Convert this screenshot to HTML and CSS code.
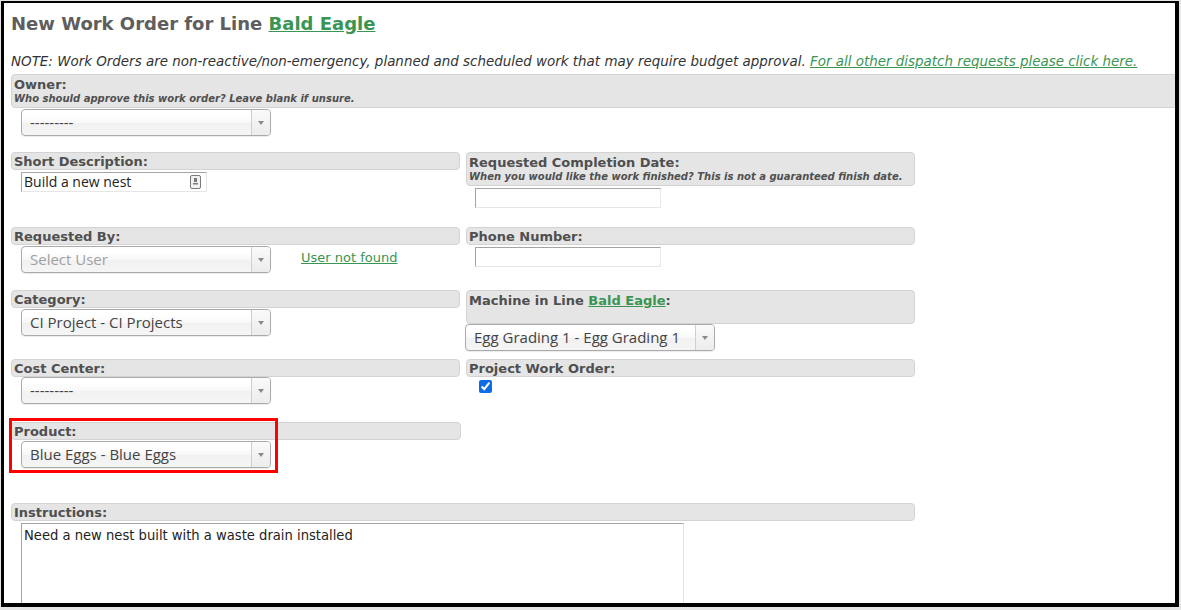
FILE: index.html
```html
<!DOCTYPE html>
<html>
<head>
<meta charset="utf-8">
<title>New Work Order</title>
<link rel="stylesheet" href="styles.css">
</head>
<body>
<div class="frame">
  <h1 class="title">New Work Order for Line <a class="lnk" href="#">Bald Eagle</a></h1>
  <p class="note">NOTE: Work Orders are non-reactive/non-emergency, planned and scheduled work that may require budget approval. <a class="lnk" href="#">For all other dispatch requests please click here.</a></p>

  <section class="owner">
    <div class="bar tall wide">
      <div class="lbl">Owner:</div>
      <div class="hint">Who should approve this work order? Leave blank if unsure.</div>
    </div>
    <div class="select"><span class="val">---------</span><span class="arrow"></span></div>
  </section>

  <div class="row r1">
    <div class="cell">
      <div class="bar"><div class="lbl">Short Description:</div></div>
      <div class="tinput short">
        <span class="tval">Build a new nest</span>
        <svg class="fill-icon" width="11" height="14" viewBox="0 0 11 14">
          <rect x="0.5" y="0.5" width="10" height="13" rx="1.5" fill="#f2f2f2" stroke="#7a7a7a"/>
          <rect x="4" y="3" width="3" height="4" fill="#7a7a7a"/>
          <rect x="3" y="8" width="5" height="1.5" fill="#7a7a7a"/>
        </svg>
      </div>
    </div>
    <div class="cell">
      <div class="bar tall">
        <div class="lbl">Requested Completion Date:</div>
        <div class="hint">When you would like the work finished? This is not a guaranteed finish date.</div>
      </div>
      <div class="tinput plain"></div>
    </div>
  </div>

  <div class="row r2">
    <div class="cell">
      <div class="bar"><div class="lbl">Requested By:</div></div>
      <div class="select-line">
        <div class="select"><span class="val placeholder">Select User</span><span class="arrow"></span></div>
        <a class="lnk user-link" href="#">User not found</a>
      </div>
    </div>
    <div class="cell">
      <div class="bar"><div class="lbl">Phone Number:</div></div>
      <div class="tinput plain phone"></div>
    </div>
  </div>

  <div class="row r3">
    <div class="cell">
      <div class="bar"><div class="lbl">Category:</div></div>
      <div class="select"><span class="val">CI Project - CI Projects</span><span class="arrow"></span></div>
    </div>
    <div class="cell">
      <div class="bar tall"><div class="lbl">Machine in Line <a class="lnk" href="#">Bald Eagle</a>:</div></div>
      <div class="select machine"><span class="val">Egg Grading 1 - Egg Grading 1</span><span class="arrow"></span></div>
    </div>
  </div>

  <div class="row r4">
    <div class="cell">
      <div class="bar"><div class="lbl">Cost Center:</div></div>
      <div class="select flush"><span class="val">---------</span><span class="arrow"></span></div>
    </div>
    <div class="cell">
      <div class="bar"><div class="lbl">Project Work Order:</div></div>
      <input class="chk" type="checkbox" checked>
    </div>
  </div>

  <div class="row r5">
    <div class="cell product">
      <div class="bar"><div class="lbl">Product:</div></div>
      <div class="select"><span class="val">Blue Eggs - Blue Eggs</span><span class="arrow"></span></div>
      <div class="highlight"></div>
    </div>
    <div class="cell"></div>
  </div>

  <div class="instructions">
    <div class="bar"><div class="lbl">Instructions:</div></div>
    <div class="textarea">Need a new nest built with a waste drain installed</div>
  </div>
</div>
</body>
</html>
```

FILE: styles.css
```css
* { box-sizing: border-box; }
html, body { margin: 0; padding: 0; }
body {
  background: #e6e6e6;
  font-family: "DejaVu Sans", Verdana, sans-serif;
  color: #444;
}
.frame {
  margin: 1px 0 0 1px;
  width: 1178px;
  height: 606px;
  border-style: solid;
  border-color: #000;
  border-width: 2px 4px 4px 3px;
  background: #fff;
  overflow: hidden;
  padding-left: 7px;
}
.title {
  margin: 9px 0 0;
  font: bold 18px/24px "DejaVu Sans", sans-serif;
  color: #5e5e5e;
}
.lnk {
  color: #3a9552;
  text-decoration: underline;
}
.note {
  margin: 18px 0 0;
  font: italic 13.45px/16px "DejaVu Sans", sans-serif;
  color: #333;
  white-space: nowrap;
}
.owner {
  margin-top: 4px;
  height: 78px;
}
.bar {
  background: #e5e5e5;
  border: 1px solid #d3d3d3;
  border-radius: 4px;
  padding: 0 2px;
  height: 18px;
}
.bar.tall {
  height: 34px;
  padding-top: 1px;
}
.bar.wide { width: 1200px; }
.lbl {
  font: bold 13px/17px "DejaVu Sans", sans-serif;
  color: #4f4f4f;
  white-space: nowrap;
}
.hint {
  font: italic bold 10px/12px "DejaVu Sans", sans-serif;
  color: #4f4f4f;
  white-space: nowrap;
}
.select {
  display: flex;
  align-items: stretch;
  width: 250px;
  height: 27px;
  margin: 1px 0 0 10px;
  border: 1px solid #aaa;
  border-radius: 4px;
  background: linear-gradient(#fff 20%, #f8f8f8 50%, #f1f1f1 52%, #f5f5f5 100%);
  box-shadow: 0 1px 1px rgba(0,0,0,0.08);
  overflow: hidden;
}
.select.flush { margin-top: 0; }
.select.machine { margin: 0 0 0 -1px; }
.val {
  flex: 1;
  padding-left: 8px;
  font: 15px/25px "Open Sans", sans-serif;
  color: #444;
  white-space: nowrap;
}
.val.placeholder { color: #a0a0a0; }
.arrow {
  width: 19px;
  border-left: 1px solid #cfcfcf;
  background: linear-gradient(#fafafa, #ececec);
  display: flex;
  align-items: center;
  justify-content: center;
}
.arrow::after {
  content: "";
  width: 0;
  height: 0;
  border-left: 3px solid transparent;
  border-right: 3px solid transparent;
  border-top: 4px solid #8a8a8a;
  margin-top: 1px;
}
.row {
  display: grid;
  grid-template-columns: 449px 449px;
  column-gap: 6px;
}
.r1 { height: 75px; }
.r2 { height: 63px; }
.r3 { height: 69px; }
.r4 { height: 63px; }
.r5 { height: 81px; }
.tinput {
  width: 186px;
  height: 20px;
  margin: 2px 0 0 10px;
  border: 1px solid;
  border-color: #a5a5a5 #e6e6e6 #e6e6e6 #a5a5a5;
  background: #fff;
  display: flex;
  align-items: center;
  justify-content: space-between;
  padding: 0 5px 0 2px;
}
.tinput.plain { margin-left: 9px; }
.tinput.phone { margin-top: 2px; }
.tval {
  font: 14px/18px "Open Sans", sans-serif;
  color: #222;
}
.fill-icon { display: block; }
.select-line {
  display: flex;
  align-items: center;
}
.user-link {
  margin: 0 0 2px 30px;
  font: 13px/16px "DejaVu Sans", sans-serif;
}
.chk {
  display: block;
  width: 13px;
  height: 13px;
  margin: 3px 0 0 13px;
  accent-color: #0b6ee6;
}
.product { position: relative; }
.product .bar { width: 450px; }
.highlight {
  position: absolute;
  left: -2px;
  top: -4px;
  width: 269px;
  height: 55px;
  border: 3px solid #f00;
}
.instructions { width: 904px; }
.textarea {
  width: 663px;
  height: 100px;
  margin: 2px 0 0 10px;
  border: 1px solid;
  border-color: #a5a5a5 #e3e3e3 #e3e3e3 #a5a5a5;
  padding: 2px 2px;
  font: 14.6px/17px "DejaVu Sans Condensed", "DejaVu Sans", sans-serif;
  color: #222;
}
```
